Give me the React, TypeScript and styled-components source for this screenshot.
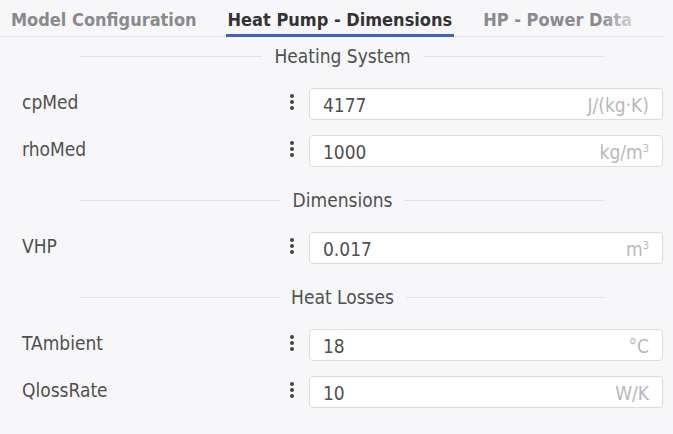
import styled, { createGlobalStyle } from 'styled-components';

const GlobalStyle = createGlobalStyle`
  html, body {
    margin: 0;
    padding: 0;
    background: #f7f7f9;
  }
  body {
    font-family: 'Liberation Sans Narrow', 'DejaVu Sans Condensed', 'Liberation Sans', sans-serif;
    color: #444;
  }
`;

const Page = styled.div`
  width: 673px;
  height: 434px;
  overflow: hidden;
`;

const TabBar = styled.div`
  position: relative;
  display: flex;
  gap: 27px;
  width: 665px;
  height: 37px;
  padding-left: 9px;
  border-bottom: 1px solid #e3e4e8;
  box-sizing: border-box;

  &::after {
    content: '';
    position: absolute;
    left: 600px;
    top: 0;
    width: 65px;
    height: 34px;
    background: linear-gradient(
      to right,
      rgba(247, 247, 249, 0),
      rgba(247, 247, 249, 0.75) 55%,
      #f7f7f9 70%
    );
  }
`;

const Tab = styled.div<{ $active?: boolean }>`
  display: flex;
  align-items: center;
  padding: 5px 2px 0 2px;
  margin-bottom: -1px;
  height: 37px;
  box-sizing: border-box;
  font-size: 18px;
  font-weight: bold;
  white-space: nowrap;
  color: ${({ $active }) => ($active ? '#333' : '#8a8a8e')};
  border-bottom: 3px solid ${({ $active }) => ($active ? '#4060c8' : 'transparent')};
`;

const Form = styled.div`
  display: flex;
  flex-direction: column;
  padding: 0 10px 0 22px;
`;

const Section = styled.div<{ $first?: boolean }>`
  display: flex;
  align-items: center;
  gap: 12px;
  height: 24px;
  margin: ${({ $first }) => ($first ? '7px' : '6px')} 58px 20px 58px;
  font-size: 19px;
  color: #505050;

  &::before,
  &::after {
    content: '';
    flex: 1;
    height: 1px;
    background: #e2e3e7;
  }
`;

const Row = styled.div`
  display: flex;
  align-items: center;
  height: 32px;
  margin-bottom: 15px;
`;

const Label = styled.div`
  width: 262px;
  font-size: 19px;
  color: #505050;
  margin-top: -5px;
`;

const MenuButton = styled.div`
  display: flex;
  flex-direction: column;
  align-items: center;
  gap: 2px;
  width: 10px;
  margin-left: 3px;
  margin-right: 12px;
  margin-top: -5px;

  span {
    width: 4px;
    height: 4px;
    border-radius: 50%;
    background: #444;
  }
`;

const InputBox = styled.div`
  display: flex;
  align-items: center;
  justify-content: space-between;
  width: 354px;
  height: 32px;
  box-sizing: border-box;
  padding: 2px 13px 0 13px;
  background: #fff;
  border: 1px solid #dcdcde;
  border-radius: 4px;
  font-size: 19px;
`;

const Value = styled.span`
  color: #505050;
`;

const Unit = styled.span`
  color: #b8b8bb;
`;

const Sup = styled.sup`
  font-size: 11px;
`;

type Field = { name: string; value: string; unit: React.ReactNode };

const groups: { title: string; fields: Field[] }[] = [
  {
    title: 'Heating System',
    fields: [
      { name: 'cpMed', value: '4177', unit: 'J/(kg·K)' },
      { name: 'rhoMed', value: '1000', unit: <>kg/m<Sup>3</Sup></> },
    ],
  },
  {
    title: 'Dimensions',
    fields: [{ name: 'VHP', value: '0.017', unit: <>m<Sup>3</Sup></> }],
  },
  {
    title: 'Heat Losses',
    fields: [
      { name: 'TAmbient', value: '18', unit: '°C' },
      { name: 'QlossRate', value: '10', unit: 'W/K' },
    ],
  },
];

export default function App() {
  return (
    <Page>
      <GlobalStyle />
      <TabBar>
        <Tab>Model Configuration</Tab>
        <Tab $active>Heat Pump - Dimensions</Tab>
        <Tab>HP - Power Data</Tab>
      </TabBar>
      <Form>
        {groups.map((g, i) => (
          <div key={g.title}>
            <Section $first={i === 0}>{g.title}</Section>
            {g.fields.map((f) => (
              <Row key={f.name}>
                <Label>{f.name}</Label>
                <MenuButton>
                  <span />
                  <span />
                  <span />
                </MenuButton>
                <InputBox>
                  <Value>{f.value}</Value>
                  <Unit>{f.unit}</Unit>
                </InputBox>
              </Row>
            ))}
          </div>
        ))}
      </Form>
    </Page>
  );
}
